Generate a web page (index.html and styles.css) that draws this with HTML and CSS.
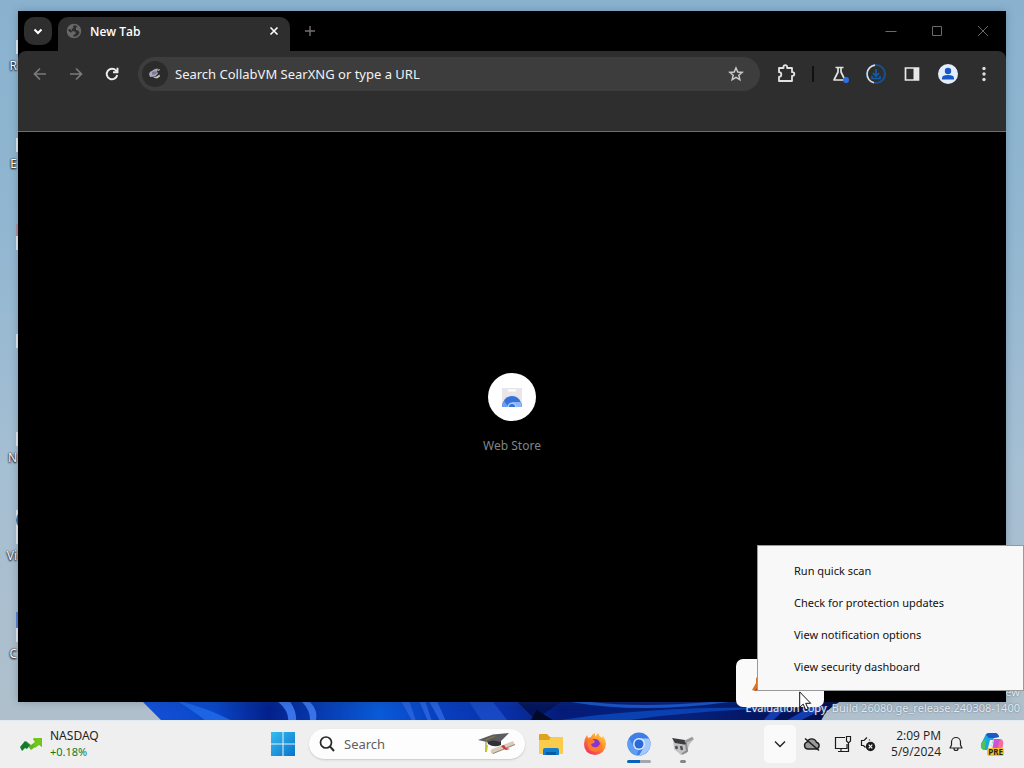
FILE: index.html
```
<!DOCTYPE html>
<html lang="en">
<head>
    <meta charset="UTF-8">
    <title>Desktop</title>
    <link rel="stylesheet" href="styles.css">
</head>

<body>

<main class="desktop">

    <svg class="bloom" viewBox="0 0 700 18" preserveAspectRatio="none" aria-hidden="true">
        <defs>
            <linearGradient id="bloomFill">
                <stop offset="0" stop-color="#1450d8"/>
                <stop offset="0.1" stop-color="#0a48c8"/>
                <stop offset="0.18" stop-color="#04208c"/>
                <stop offset="0.34" stop-color="#0a5ad8"/>
                <stop offset="0.42" stop-color="#0840c0"/>
                <stop offset="0.52" stop-color="#0a30a8"/>
                <stop offset="0.6" stop-color="#041c78"/>
                <stop offset="0.78" stop-color="#06207c"/>
                <stop offset="1" stop-color="#020c48"/>
            </linearGradient>
        </defs>
        <path d="M0 0H700Q686 8 682 18H18Q8 8 0 0z" fill="url(#bloomFill)"/>
        <path d="M36 0Q52 10 62 18H88Q64 6 40 0z" fill="#1c64e4"/>
        <path d="M136 0Q146 8 146 18H154Q154 8 148 0zM160 0Q168 8 168 18H174Q176 8 168 0z" fill="#3a72ea"/>
        <path d="M260 0L270 18H274L268 0zM278 0L286 18H290L284 0zM288 0L298 18H304L296 0z" fill="#2860dc"/>
        <path d="M328 0L340 18H366L352 0z" fill="#1848c4"/>
        <path d="M376 0L394 18H400L386 0z" fill="#2c60d8"/>
        <path d="M376 0H420L394 18z" fill="#04145a"/>
        <path d="M396 8L412 18H390z" fill="#020828"/>
        <path d="M430 0Q500 12 590 0H570Q500 6 450 0z" fill="#1a54c8"/>
        <path d="M420 18Q520 3 650 6Q560 8 490 18z" fill="#0a40b0"/>
        <path d="M640 0L624 18H634L652 0zM672 4L648 18H662L690 4z" fill="#123cb0"/>
    </svg>

    <div class="shortcuts">
        <div class="shortcut"><i class="edge"></i><span>R</span></div>
        <div class="shortcut"><i class="edge"></i><span>E</span></div>
        <div class="shortcut"><i class="edge red"></i></div>
        <div class="shortcut"><i class="edge"></i></div>
        <div class="shortcut"><i class="edge"></i><span>N</span></div>
        <div class="shortcut"><i class="edge teal"></i><span>Vi</span></div>
        <div class="shortcut"><i class="edge blue"></i><span>C</span></div>
    </div>

    <div class="watermark">
        <div>ew</div>
        <div>Evaluation copy. Build 26080.ge_release.240308-1400</div>
    </div>

    <section class="window">

        <div class="tabstrip">
            <button class="tabSearch" aria-label="Search tabs">
                <svg width="12" height="12" viewBox="0 0 12 12"><path d="M2.500 4.500L6 8l3.500-3.500" fill="none" stroke="#fff" stroke-width="2"/></svg>
            </button>
            <div class="tab">
                <svg width="16" height="16" viewBox="0 0 16 16">
                    <circle cx="8" cy="8" r="6.500" fill="none" stroke="#66686a" stroke-width="1.500"/>
                    <path d="M8.500 1.500L7 3.500 7.500 5 5.500 6 6 8l3 .5 1 2-2.500 1.500L7 14.500Q1 13.500 1.500 7l3 2.500 2-.5L4 6 1.800 6Q3 1.500 8.500 1.500zM10 4.500l2.500-1.500 2 4.500-.500 2-2-2-2-.5z" fill="#66686a"/>
                </svg>
                <span class="tabTitle">New Tab</span>
                <button aria-label="Close tab">
                    <svg width="10" height="10" viewBox="0 0 10 10"><path d="M1.500 1.500l7 7M8.500 1.500l-7 7" stroke="#fff" stroke-width="1.600"/></svg>
                </button>
            </div>
            <button class="newTab" aria-label="New tab">
                <svg width="12" height="12" viewBox="0 0 12 12"><path d="M6 1v10M1 6h10" stroke="#77706c" stroke-width="1.400"/></svg>
            </button>
            <div class="windowButtons">
                <button aria-label="Minimize"><svg width="12" height="12" viewBox="0 0 12 12"><path d="M0.500 6.500h11" stroke="#6c6a64"/></svg></button>
                <button aria-label="Maximize"><svg width="12" height="12" viewBox="0 0 12 12"><path d="M1.500 1.500h9v9h-9z" fill="none" stroke="#6c6a64"/></svg></button>
                <button aria-label="Close"><svg width="12" height="12" viewBox="0 0 12 12"><path d="M1 1l10 10M11 1L1 11" stroke="#6c6a64"/></svg></button>
            </div>
        </div>

        <div class="toolbar">
            <button aria-label="Back"><svg width="16" height="16" viewBox="0 0 16 16"><path d="M14 8H3M8 2.500L2.500 8 8 13.500" fill="none" stroke="#7b7b7b" stroke-width="1.700"/></svg></button>
            <button aria-label="Forward"><svg width="16" height="16" viewBox="0 0 16 16"><path d="M2 8h11M8 2.500L13.500 8 8 13.500" fill="none" stroke="#7b7b7b" stroke-width="1.700"/></svg></button>
            <button aria-label="Reload"><svg width="16" height="16" viewBox="0 0 16 16"><path d="M13.200 9A5.300 5.300 0 1 1 12 4.500L13.300 6M13.500 1.800V6.300H9" fill="none" stroke="#eee" stroke-width="1.900"/></svg></button>

            <div class="omnibox">
                <span class="engine">
                    <svg width="14" height="14" viewBox="0 0 14 14">
                        <path d="M2 5l5-3 3-.5-1 3 1 2-3 3-5 .5-1-3z" fill="#a9a9b4"/>
                        <path d="M4 5l4-1 1 2-3 2-2-.5z" fill="#7878a8"/>
                        <path d="M9 3l3-1-1 2zM5 10.500l4 1 3-2-.5-2L8.500 9.500zM8.500 7.500l2-1.500" fill="#c9c9aa"/>
                    </svg>
                </span>
                <input type="text" aria-label="Address and search bar" placeholder="Search CollabVM SearXNG or type a URL">
                <button aria-label="Bookmark this tab"><svg width="16" height="16" viewBox="0 0 18 18"><path d="M9 2.200l2 4.600 4.900.4-3.700 3.200 1.100 4.900L9 12.700l-4.300 2.600 1.100-4.900-3.700-3.200L7 6.800z" fill="none" stroke="#c9c9c9" stroke-width="1.700"/></svg></button>
            </div>

            <div class="extensions">
                <button aria-label="Extensions"><svg width="20" height="20" viewBox="0 0 20 20"><path d="M3 4h4.500V3a1.800 1.800 0 0 1 3.600 0v1H16v4.200h.5a1.800 1.800 0 0 1 0 3.600H16V17H3v-4.200a2.300 2.300 0 0 0 0-4.600z" fill="none" stroke="#e2e2e2" stroke-width="1.800" stroke-linejoin="round"/></svg></button>
                <i class="separator"></i>
                <button aria-label="Experiments"><svg width="20" height="20" viewBox="0 0 20 20"><path d="M5.500 3.500h8M8 3.500V8L4 16h11l-4-8V3.500" fill="none" stroke="#e2e2e2" stroke-width="1.700" stroke-linejoin="round"/><circle cx="16" cy="16" r="3" fill="#2b70e8"/></svg></button>
                <button aria-label="Downloads"><svg width="20" height="20" viewBox="0 0 20 20"><circle cx="10" cy="10" r="9" fill="none" stroke="#17528e" stroke-width="2"/><path d="M8 18.800A9 9 0 0 1 9 1.100" fill="none" stroke="#e0ddd6" stroke-width="1.600"/><path d="M10 5v7M6.800 9l3.200 3.200L13.200 9M6 12v2.500h8V12" fill="none" stroke="#155ca8" stroke-width="1.700"/></svg></button>
                <button aria-label="Side panel"><svg width="16" height="16" viewBox="0 0 16 16"><path d="M1.500 2h13v12h-13z" fill="none" stroke="#e8e8e8" stroke-width="1.700"/><path d="M9.500 2h5v12h-5z" fill="#e8e8e8"/></svg></button>
                <button aria-label="Profile"><svg width="20" height="20" viewBox="0 0 20 20"><circle cx="10" cy="10" r="10" fill="#e4edfc"/><circle cx="10" cy="7" r="3.200" fill="#1558c8"/><path d="M4 15.500v-1.500q0-3 6-3t6 3v1.500z" fill="#1558c8"/></svg></button>
                <button aria-label="Menu"><svg width="16" height="16" viewBox="0 0 16 16"><circle cx="8" cy="2.500" r="1.700" fill="#ddd"/><circle cx="8" cy="8" r="1.700" fill="#ddd"/><circle cx="8" cy="13.500" r="1.700" fill="#ddd"/></svg></button>
            </div>
        </div>

        <div class="bookmarks"></div>

        <div class="page">
            <a href="#" class="tile">
                <span class="tileIcon">
                    <svg width="24" height="24" viewBox="0 0 24 24">
                        <path d="M2 3h20v18H2z" fill="#e8e6e9"/>
                        <path d="M8 5.500h8" stroke="#fff" stroke-width="2"/>
                        <path d="M2 22a10 11 0 0 1 20 0z" fill="#3870dc"/>
                        <path d="M2 22a10 11 0 0 1 2-6l4.500 6z" fill="#6ba0ee"/>
                        <path d="M22 22a10 11 0 0 0-1.500-5H12l3.500 5z" fill="#8bb8f4"/>
                        <path d="M7.500 22a4.500 4.500 0 0 1 9 0z" fill="#a9c9f8"/>
                        <path d="M9 22a3 3 0 0 1 6 0z" fill="#3870dc"/>
                    </svg>
                </span>
                <span>Web Store</span>
            </a>
        </div>

    </section>

    <div class="flyout">
        <svg width="12" height="20" viewBox="0 0 12 20"><path d="M3 18L0 17l4-7V5l4-3 3 6v6q-3-1-6 2l-1 2z" fill="#dc7424"/><path d="M3 18l3-5 1 4z" fill="#a33c10"/></svg>
    </div>

    <div class="contextMenu" role="menu">
        <button role="menuitem">Run quick scan</button>
        <button role="menuitem">Check for protection updates</button>
        <button role="menuitem">View notification options</button>
        <button role="menuitem">View security dashboard</button>
    </div>

    <svg class="cursor" width="13" height="20" viewBox="0 0 13 20"><path d="M.7.9v15.500l3.500-3.300 2.500 5.700 2.500-1-2.500-5.500h5z" fill="#fff" stroke="#111"/></svg>

</main>

<footer class="taskbar">

    <button class="widgets">
        <svg width="24" height="16" viewBox="0 0 24 16">
            <path d="M1 11l5-6 5 4 4-3-2-3 9-1v9l-3-3-8 6-4-5-3 3z" fill="#62b81c"/>
            <path d="M13 2h9v9l-3-2-4 3-1-4 2-2z" fill="#74c41e"/>
            <path d="M0 11l5-6 5 4-3 4-2-1-3 3z" fill="#147a2c"/>
        </svg>
        <span>NASDAQ<br><span class="up">+0.18%</span></span>
    </button>

    <nav class="apps">
        <button class="start" aria-label="Start">
            <svg width="24" height="24" viewBox="0 0 24 24">
                <defs><linearGradient id="start" x2="1" y2="1"><stop offset="0" stop-color="#36bdf2"/><stop offset="1" stop-color="#0873cc"/></linearGradient></defs>
                <path d="M0 0h11.500v11.500H0zM12.500 0H24v11.500H12.500zM0 12.500h11.500V24H0zM12.500 12.500H24V24H12.500z" fill="url(#start)"/>
            </svg>
        </button>

        <label class="search">
            <svg width="18" height="18" viewBox="0 0 18 18"><circle cx="8" cy="7.500" r="5.500" fill="none" stroke="#262626" stroke-width="1.700"/><path d="M12 11.500l4 4.500" stroke="#262626" stroke-width="1.900"/></svg>
            <input type="text" aria-label="Search" placeholder="Search">
            <svg width="38" height="24" viewBox="0 0 38 24">
                <path d="M9 9q7-3 14 0v4q-7 3-13-1z" fill="#303135"/>
                <path d="M0 8L15 2.500 31 1 22 10q-7-3-13 0z" fill="#5c5d61"/>
                <path d="M17 4L8 8v6" fill="none" stroke="#8a8040"/>
                <path d="M7 13h3l-1 7H7z" fill="#c7c51e"/>
                <path d="M13 17.500L35 9l2 4-22 9q-3 0-2-4.500z" fill="#dccbb8"/>
                <path d="M15 21.500L37 12.500" stroke="#9a8a7c"/>
                <path d="M23 14l3-1 2 3 4 1-4 1-2-1z" fill="#c8363c"/>
            </svg>
        </label>

        <button class="app" aria-label="File Explorer">
            <svg width="26" height="24" viewBox="0 0 26 24"><path d="M1 3q0-1 1-1h7l3 3h12q1 0 1 1v4H1z" fill="#dfa21c"/><path d="M1 8h10l2-3h11q1 0 1 1v15q0 1-1 1H2q-1 0-1-1z" fill="#fbcb4c"/><path d="M5 23v-5q0-2 2-2h12q2 0 2 2v5z" fill="#147ccc"/><path d="M8 20h10v3H8z" fill="#0b5ba4"/></svg>
        </button>
        <button class="app" aria-label="Firefox">
            <svg width="24" height="24" viewBox="0 0 24 24">
                <defs><linearGradient id="fox" x1="1" x2="0.200" y2="1"><stop offset="0" stop-color="#ffe03c"/><stop offset="0.500" stop-color="#ff8a28"/><stop offset="1" stop-color="#f02a60"/></linearGradient></defs>
                <path d="M12 23Q1 22 1 12q0-5 3-9l1 3 3-1q1-3 4-4v4l3-4q1 3 4 5l1-2q3 4 3 8-1 10-11 11z" fill="url(#fox)"/>
                <circle cx="12" cy="12" r="5" fill="#8437d0"/>
                <path d="M5 8q3-2 7 1l-1 2-3 1q1 4 6 3 4-2 3-6 4 5 0 9-6 4-11-1-2-4-1-9z" fill="#ff7b30"/>
            </svg>
        </button>
        <button class="app active" aria-label="Chromium">
            <svg width="24" height="24" viewBox="0 0 24 24">
                <circle cx="12" cy="12" r="11.500" fill="#3f7ee6"/>
                <path d="M12 6.500h10A11.500 11.500 0 0 1 12 23.500l5-8.500z" fill="#a4c8fa"/>
                <path d="M2 6.300L7 15l5 2.500-2.500 6A11.500 11.500 0 0 1 2 6.300z" fill="#5e9df2"/>
                <circle cx="12" cy="12" r="6" fill="#dceaff"/><circle cx="12" cy="12" r="4.500" fill="#286bd8"/>
            </svg>
        </button>
        <button class="app running" aria-label="Camera tool">
            <svg width="24" height="24" viewBox="0 0 24 24">
                <path d="M2 8l12 1 6-3 3 1-5 6-2 8-6 2-7-6z" fill="#c2c2c4"/>
                <path d="M1 6l13 2 2 5-12-2z" fill="#3c3c40"/>
                <path d="M14 10l8-4" stroke="#9a9a9e" stroke-width="3"/>
                <path d="M5 14l1 3M10 14l1 4" stroke="#505056" stroke-width="2.500"/>
                <path d="M15 12l1 7-5 3" fill="none" stroke="#8c8c90" stroke-width="2"/>
            </svg>
        </button>
    </nav>

    <div class="tray">
        <button class="chevron" aria-label="Hidden icons"><svg width="12" height="12" viewBox="0 0 12 12"><path d="M1 3.500l5 5 5-5" fill="none" stroke="#222" stroke-width="1.400"/></svg></button>
        <button class="cloud" aria-label="OneDrive"><svg width="18" height="16" viewBox="0 0 18 16"><path d="M4.500 13A3.500 3.500 0 0 1 4 6.200a5 5 0 0 1 9.400 0A3.500 3.500 0 0 1 13.500 13z" fill="#9a9a9a" stroke="#1c1c1c" stroke-width="1.400"/><path d="M2 2.500l14 12" stroke="#1c1c1c" stroke-width="1.600"/></svg></button>
        <button class="status" aria-label="Network and volume">
            <svg width="18" height="18" viewBox="0 0 18 18"><path d="M11 2.500H1.500v11H13V9M7 13.500V16M4 16.500h10.500V8M12.500 1.500h4v4.500l-2 2-2-2z" fill="none" stroke="#1c1c1c" stroke-width="1.200"/></svg>
            <svg width="16" height="16" viewBox="0 0 16 16"><path d="M7 1.500L4 4.500H1.500v5h2l2 2M9.500 3.500v1" fill="none" stroke="#1c1c1c" stroke-width="1.200"/><circle cx="10.500" cy="10.500" r="4.700" fill="#1c1c1c"/><path d="M8.700 8.700l3.600 3.600M12.300 8.700l-3.600 3.600" stroke="#fff" stroke-width="1.200"/></svg>
        </button>
        <button class="clock">2:09 PM<br>5/9/2024</button>
        <button class="bell" aria-label="Notifications"><svg width="16" height="16" viewBox="0 0 16 16"><path d="M2 12l1.500-3V6a4.500 4.500 0 0 1 9 0v3l1.500 3zM6 12.500a2 2 0 0 0 4 0" fill="none" stroke="#222" stroke-width="1.200" stroke-linejoin="round"/></svg></button>
        <button class="copilot" aria-label="Copilot">
            <svg width="24" height="24" viewBox="0 0 24 24">
                <path d="M6 2q1-1 3-1h6q3 0 4 4l-5 1-3 9q-1 3-4 3H4q-4-1-3-6z" fill="#18a8dc"/>
                <path d="M9 1h6q3 0 4 4l-5 1H9L6 3q1-2 3-2z" fill="#1b58c8"/>
                <path d="M1 11l5-4-1 11q-4 0-4-5z" fill="#4cc45a"/>
                <path d="M14 7h6q4 1 3 6l-2 6h-9z" fill="#d054d0"/>
                <path d="M20 7q4 1 3 6l-2 6h-4z" fill="#f4709c"/>
                <path d="M10 8h3l-2 8H8z" fill="#f0f0f0"/>
            </svg>
            <span>PRE</span>
        </button>
    </div>

</footer>

</body>
</html>
```
FILE: styles.css
```
body {
    margin: 0;
    height: 100vh;
    display: flex;
    flex-direction: column;
    overflow: hidden;
    font-family: "Noto Sans", "Open Sans", sans-serif;
    font-size: 12px;
}

button {
    display: flex;
    align-items: center;
    justify-content: center;
    padding: 0;
    border: 0;
    background: none;
    font: inherit;
    color: inherit;
}

input {
    flex: 1;
    min-width: 0;
    padding: 0;
    border: 0;
    outline: 0;
    background: none;
    font: inherit;
}

svg {
    flex: none;
}

.desktop {
    flex: 1;
    position: relative;
    overflow: hidden;
    background: linear-gradient(#8ab2cf, #90b6d0 30%, #a5bfd3 65%, #b0bfcc);
}

.bloom {
    position: absolute;
    left: 14%;
    bottom: 0;
    width: 68%;
    height: 18px;
}

/* the window covers everything but the right ends of these */
.shortcuts {
    width: 18px;
}

.shortcut {
    height: 98px;
    box-sizing: border-box;
    padding-top: 40px;
    text-align: right;
    line-height: 16px;
    color: white;
    text-shadow: 0 1px 2px black, 0 0 2px black;
}

.shortcut span {
    display: block;
    padding-right: 1px;
}

.edge {
    display: block;
    width: 2px;
    height: 14px;
    margin-left: auto;
    margin-bottom: 4px;
    background-color: #e6edf4;
}

.edge.red {
    border-top: 12px solid #b58fa5;
    margin-top: -12px;
}

.edge.teal {
    border-top: 20px dotted #2376b0;
    margin-top: -20px;
}

.edge.blue {
    border-top: 16px solid #5b84d8;
    margin-top: -16px;
}

.watermark {
    position: absolute;
    right: 4px;
    bottom: 4px;
    text-align: right;
    line-height: 16px;
    font-size: 11px;
    color: #e6ebf0;
    text-shadow: 0 0 2px #56677c;
}

.window {
    position: absolute;
    top: 11px;
    right: 18px;
    bottom: 18px;
    left: 18px;
    display: flex;
    flex-direction: column;
    background-color: black;
    box-shadow: 0 0 8px rgba(40, 60, 80, 0.3);
}

.tabstrip {
    height: 40px;
    display: flex;
    align-items: center;
    padding-left: 6px;
}

.tabSearch {
    width: 28px;
    height: 28px;
    border-radius: 10px;
    background-color: #2e2e2e;
}

.tab {
    width: 232px;
    height: 34px;
    box-sizing: border-box;
    align-self: flex-end;
    display: flex;
    align-items: center;
    gap: 8px;
    margin-left: 6px;
    padding: 0 11px 6px 8px;
    border-radius: 10px 10px 0 0;
    background-color: #2e2e2e;
    color: white;
    font-family: "Open Sans", sans-serif;
    font-weight: 600;
}

.tabTitle {
    flex: 1;
}

.newTab {
    width: 28px;
    height: 28px;
    margin-left: 6px;
}

.windowButtons {
    display: flex;
    margin-left: auto;
}

.windowButtons button {
    width: 46px;
    height: 38px;
}

.toolbar {
    height: 46px;
    display: flex;
    align-items: center;
    padding: 0 4px;
    border-radius: 8px 8px 0 0;
    background-color: #2e2e2e;
}

.toolbar button {
    width: 36px;
    height: 34px;
}

.omnibox {
    flex: 1;
    height: 34px;
    display: flex;
    align-items: center;
    margin-left: 8px;
    padding-left: 4px;
    border-radius: 17px;
    background-color: #3d3d3d;
    font-size: 13px;
}

.omnibox button {
    width: 48px;
}

.omnibox input::placeholder {
    color: #f2f2f2;
    opacity: 1;
}

.engine {
    width: 26px;
    height: 26px;
    display: flex;
    align-items: center;
    justify-content: center;
    margin-right: 7px;
    border-radius: 13px;
    background-color: #2b2b2b;
}

.extensions {
    display: flex;
    align-items: center;
    margin-left: 8px;
}

.separator {
    width: 2px;
    height: 16px;
    margin: 0 8px;
    background-color: #111;
}

.bookmarks {
    height: 34px;
    background-color: #2e2e2e;
    border-bottom: 1px solid #6e6e6e;
}

.page {
    flex: 1;
    display: flex;
    align-items: center;
    justify-content: center;
}

.tile {
    display: flex;
    flex-direction: column;
    align-items: center;
    gap: 16px;
    margin-bottom: 8px;
    color: #7f8589;
    text-decoration: none;
}

.tileIcon {
    width: 48px;
    height: 48px;
    display: flex;
    align-items: center;
    justify-content: center;
    border-radius: 24px;
    background-color: white;
}

.flyout {
    position: absolute;
    right: 200px;
    bottom: 13px;
    width: 72px;
    height: 48px;
    padding-left: 16px;
    display: flex;
    align-items: center;
    border-radius: 7px;
    background-color: #fafafa;
}

.contextMenu {
    position: absolute;
    right: 0;
    bottom: 29px;
    width: 265px;
    padding: 8px 0;
    border: 1px solid #999;
    background-color: #f8f8f8;
    color: #111;
    font-size: 11px;
}

.contextMenu button {
    width: 100%;
    height: 32px;
    justify-content: flex-start;
    padding-left: 36px;
}

.cursor {
    position: absolute;
    right: 212px;
    bottom: 9px;
}

.taskbar {
    height: 48px;
    box-sizing: border-box;
    display: flex;
    align-items: center;
    padding-bottom: 1px;
    border-top: 1px solid #e2eaf4;
    background-color: #efefef;
    color: #222;
}

.widgets {
    width: 271px;
    box-sizing: border-box;
    justify-content: flex-start;
    gap: 6px;
    padding-left: 20px;
    text-align: left;
    line-height: 16px;
    font-size: 12px;
}

.up {
    font-size: 11px;
    color: #147a1c;
}

.apps {
    height: 100%;
    display: flex;
    align-items: center;
}

.start {
    width: 24px;
    margin-right: 14px;
}

.search {
    width: 216px;
    height: 30px;
    box-sizing: border-box;
    display: flex;
    align-items: center;
    gap: 8px;
    margin-right: 4px;
    padding: 0 9px;
    border-radius: 15px;
    background-color: #fdfdfd;
    box-shadow: 0 1px 2px #c8c8c8;
    font-size: 13px;
}

.search input::placeholder {
    color: #606060;
    opacity: 1;
}

.app {
    width: 44px;
    height: 100%;
    position: relative;
}

.app.active::after,
.app.running::after {
    content: "";
    position: absolute;
    bottom: 4px;
    width: 6px;
    height: 3px;
    border-radius: 2px;
    background-color: #858585;
}

.app.active::after {
    width: 24px;
    background: linear-gradient(90deg, #0863b8 55%, #a4a8ae 55%);
}

.tray {
    display: flex;
    align-items: center;
    margin-left: auto;
    padding-right: 20px;
}

.chevron {
    width: 32px;
    height: 38px;
    border-radius: 5px;
    background-color: #fafafa;
}

.cloud {
    width: 32px;
}

.status {
    gap: 8px;
    margin-left: 6px;
}

.clock {
    margin-left: 15px;
    text-align: right;
    line-height: 16px;
    font-family: "Open Sans", sans-serif;
}

.bell {
    width: 30px;
}

.copilot {
    margin-left: 9px;
    position: relative;
}

.copilot span {
    position: absolute;
    right: 0;
    bottom: 0;
    padding: 0 1px;
    border-radius: 2px;
    background-color: #fbc02a;
    color: #222;
    font-size: 8px;
    font-weight: 700;
    line-height: 8px;
}
```
